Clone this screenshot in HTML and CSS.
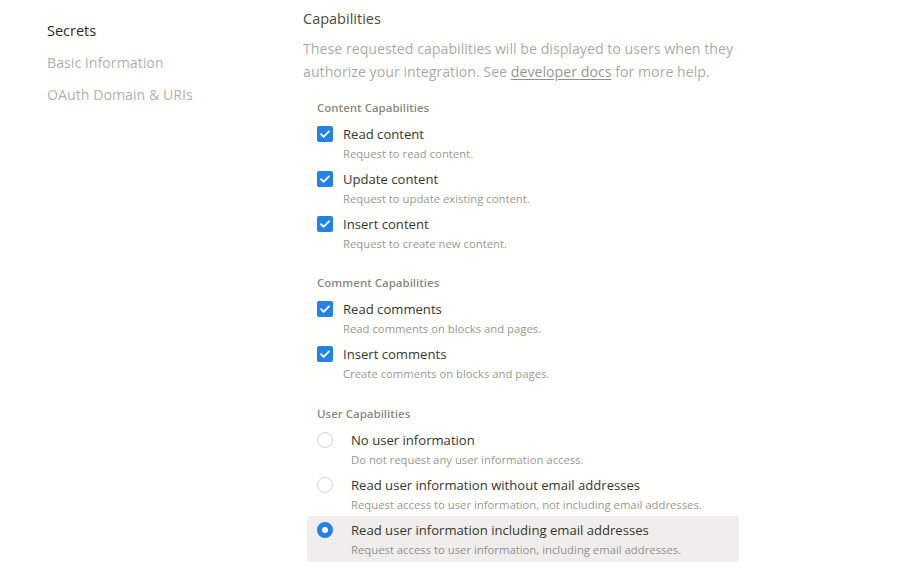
FILE: index.html
```html
<!DOCTYPE html>
<html lang="en">
<head>
<meta charset="utf-8">
<title>Capabilities</title>
<link rel="stylesheet" href="styles.css">
</head>
<body>
<div class="layout">
  <nav class="sidebar">
    <div class="nav-item active">Secrets</div>
    <div class="nav-item">Basic Information</div>
    <div class="nav-item">OAuth Domain &amp; URIs</div>
  </nav>
  <main class="main">
    <h2 class="title">Capabilities</h2>
    <p class="intro">These requested capabilities will be displayed to users when they authorize your integration. See <a class="link">developer docs</a> for more help.</p>

    <section class="group">
      <div class="group-title">Content Capabilities</div>
      <div class="options">
        <div class="option">
          <span class="check"><svg viewBox="0 0 16 16" width="16" height="16"><path d="M4 8.2l2.6 2.6L12 5.4" fill="none" stroke="#fff" stroke-width="1.8" stroke-linecap="round" stroke-linejoin="round"/></svg></span>
          <div class="text"><div class="label">Read content</div><div class="desc">Request to read content.</div></div>
        </div>
        <div class="option">
          <span class="check"><svg viewBox="0 0 16 16" width="16" height="16"><path d="M4 8.2l2.6 2.6L12 5.4" fill="none" stroke="#fff" stroke-width="1.8" stroke-linecap="round" stroke-linejoin="round"/></svg></span>
          <div class="text"><div class="label">Update content</div><div class="desc">Request to update existing content.</div></div>
        </div>
        <div class="option">
          <span class="check"><svg viewBox="0 0 16 16" width="16" height="16"><path d="M4 8.2l2.6 2.6L12 5.4" fill="none" stroke="#fff" stroke-width="1.8" stroke-linecap="round" stroke-linejoin="round"/></svg></span>
          <div class="text"><div class="label">Insert content</div><div class="desc">Request to create new content.</div></div>
        </div>
      </div>
    </section>

    <section class="group">
      <div class="group-title">Comment Capabilities</div>
      <div class="options">
        <div class="option">
          <span class="check"><svg viewBox="0 0 16 16" width="16" height="16"><path d="M4 8.2l2.6 2.6L12 5.4" fill="none" stroke="#fff" stroke-width="1.8" stroke-linecap="round" stroke-linejoin="round"/></svg></span>
          <div class="text"><div class="label">Read comments</div><div class="desc">Read comments on blocks and pages.</div></div>
        </div>
        <div class="option">
          <span class="check"><svg viewBox="0 0 16 16" width="16" height="16"><path d="M4 8.2l2.6 2.6L12 5.4" fill="none" stroke="#fff" stroke-width="1.8" stroke-linecap="round" stroke-linejoin="round"/></svg></span>
          <div class="text"><div class="label">Insert comments</div><div class="desc">Create comments on blocks and pages.</div></div>
        </div>
      </div>
    </section>

    <section class="group">
      <div class="group-title">User Capabilities</div>
      <div class="options">
        <div class="option radio-option">
          <span class="radio"></span>
          <div class="text"><div class="label">No user information</div><div class="desc">Do not request any user information access.</div></div>
        </div>
        <div class="option radio-option">
          <span class="radio"></span>
          <div class="text"><div class="label">Read user information without email addresses</div><div class="desc">Request access to user information, not including email addresses.</div></div>
        </div>
        <div class="option radio-option selected">
          <span class="radio on"></span>
          <div class="text"><div class="label">Read user information including email addresses</div><div class="desc">Request access to user information, including email addresses.</div></div>
        </div>
      </div>
    </section>
  </main>
</div>
</body>
</html>
```
FILE: styles.css
```css
* { box-sizing: border-box; }
html, body { margin: 0; padding: 0; }
body {
  background: #fffffe;
  font-family: "Open Sans", "Noto Sans", "Liberation Sans", sans-serif;
  color: #37352f;
}
.layout {
  display: flex;
  padding-left: 47px;
}
.sidebar {
  width: 256px;
  flex: none;
  padding-top: 15px;
}
.nav-item {
  font-size: 14.2px;
  line-height: 32px;
  color: rgba(55, 53, 47, 0.42);
  white-space: nowrap;
}
.nav-item.active { color: #2b2a26; font-size: 14.5px; }
.main {
  width: 440px;
  flex: none;
  padding-top: 7px;
}
.title {
  margin: 0;
  font-size: 14.5px;
  font-weight: 500;
  line-height: 24px;
  color: #4b4a46;
}
.intro {
  margin: 6px 0 0;
  font-size: 14.2px;
  line-height: 23px;
  color: rgba(55, 53, 47, 0.45);
}
.link {
  color: rgba(55, 53, 47, 0.55);
  text-decoration: underline;
  text-underline-offset: 2px;
}
.group { margin-top: 17px; }
.group + .group { margin-top: 20px; }
.group:last-child { margin-top: 21px; }
.group-title {
  padding-left: 14px;
  font-size: 11.5px;
  font-weight: 600;
  line-height: 16px;
  color: rgba(55, 53, 47, 0.62);
}
.options {
  margin: 4px 4px 0;
}
.option {
  display: flex;
  align-items: flex-start;
  gap: 10px;
  padding: 4px 10px 2px;
  border-radius: 4px;
}
.radio-option { gap: 18px; }
.option.selected { background: #efeeed; padding-bottom: 3px; }
.check {
  flex: none;
  width: 16px;
  height: 16px;
  margin-top: 2px;
  background: #2383e2;
  border-radius: 2px;
  display: flex;
}
.radio {
  flex: none;
  width: 16px;
  height: 16px;
  margin-top: 2px;
  border-radius: 50%;
  border: 1.5px solid #d6d5d2;
  background: #fff;
}
.radio.on {
  border: 5px solid #2383e2;
  background: #fff;
}
.label {
  font-size: 13.1px;
  line-height: 20px;
  color: #37352f;
  white-space: nowrap;
}
.desc {
  margin-top: 1px;
  font-size: 11.3px;
  line-height: 18px;
  color: rgba(55, 53, 47, 0.55);
  white-space: nowrap;
}
```
